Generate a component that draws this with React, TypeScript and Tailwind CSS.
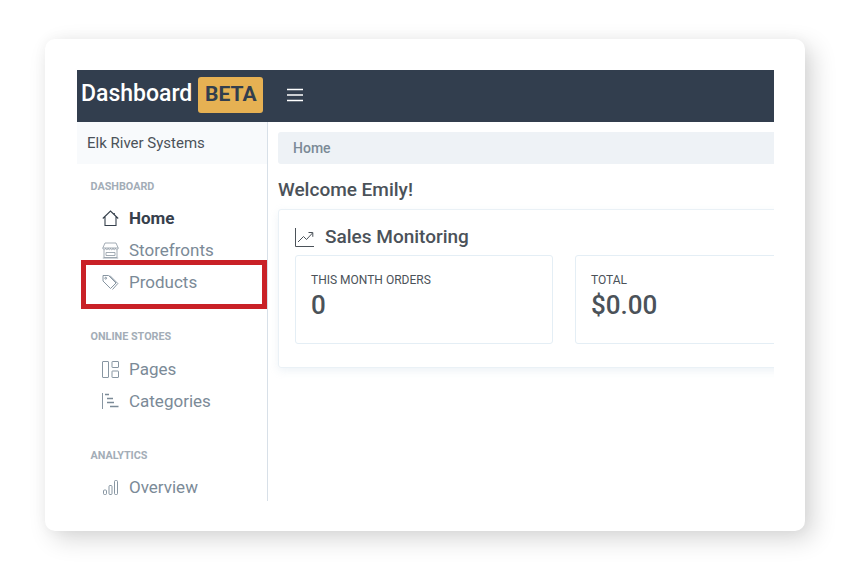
const NAV_TEXT = "text-[17px] leading-[32px] text-[#7b8a97]";

function HomeIcon() {
  return (
    <svg width="17" height="17" viewBox="0 0 17 17" fill="none" stroke="#36404c" strokeWidth="1.1">
      <path d="M.8 8.5 8.5 1 16.2 8.5M3 6.6V15.5H14V6.6M12.3 3V5" />
    </svg>
  );
}

function StoreIcon() {
  return (
    <svg width="17" height="17" viewBox="0 0 17 17" fill="none" stroke="#98a3ad" strokeWidth="0.9">
      <path d="M3 1H14L16.2 6H.8ZM.8 6C.8 8.2 3.6 8.2 3.6 6 3.6 8.2 6.2 8.2 6.2 6 6.2 8.2 8.5 8.2 8.5 6 8.5 8.2 11 8.2 11 6 11 8.2 13.4 8.2 13.4 6 13.4 8.2 16.2 8.2 16.2 6M2 8V15.5H15V8M.8 16H16.2M4 10.5H13V13.5H4Z" />
    </svg>
  );
}

function TagIcon() {
  return (
    <svg width="17" height="17" viewBox="0 0 17 17" fill="none" stroke="#7b8a97" strokeWidth="0.9">
      <path d="M1 1.5H6.5L14 9 8.5 14.5 1 7ZM7.8 1.5 15.8 9.5 10.5 15.5" />
      <circle cx="3.7" cy="4.2" r="0.9" />
    </svg>
  );
}

function PagesIcon() {
  return (
    <svg width="17" height="17" viewBox="0 0 17 17" fill="none" stroke="#7b8a97" strokeWidth="0.9">
      <rect x="0.5" y="0.5" width="6" height="16" rx="0.5" />
      <rect x="10" y="0.5" width="6.5" height="6" rx="0.5" />
      <rect x="10" y="10" width="6.5" height="6.5" rx="0.5" />
    </svg>
  );
}

function CategoriesIcon() {
  return (
    <svg width="17" height="17" viewBox="0 0 17 17" fill="none" stroke="#7b8a97">
      <path d="M.5 0V16" strokeWidth="0.9" />
      <path d="M3 1.5H7M5 5.5H11M5 9.5H12M8 13.5H16.5" strokeWidth="1.5" />
    </svg>
  );
}

function BarsIcon() {
  return (
    <svg className="ml-[1px]" width="15" height="15" viewBox="0 0 15 15" fill="none" stroke="#7b8a97" strokeWidth="0.9">
      <rect x="0.5" y="10" width="3" height="4.5" rx="1" />
      <rect x="6" y="5.5" width="3" height="9" rx="1" />
      <rect x="11.5" y="0.5" width="3" height="14" rx="1" />
    </svg>
  );
}

function ChartIcon() {
  return (
    <svg width="19" height="19" viewBox="0 0 19 19" fill="none" stroke="#4b5259" strokeWidth="1">
      <path d="M.5 0V18.5H19M3 14 8.5 8.5 11.5 11.5 17.5 5M13.5 4.5H17.8V8.8" />
    </svg>
  );
}

function SectionLabel({ children, className }: { children: string; className: string }) {
  return (
    <div className={`pl-[13.5px] text-[10.8px] leading-[12px] font-bold text-[#a3adb7] ${className}`}>
      {children}
    </div>
  );
}

function NavItem({ icon, label, active }: { icon: React.ReactNode; label: string; active?: boolean }) {
  return (
    <div className="flex h-[32px] items-center pl-[25px]">
      <span className="flex w-[27px] items-center">{icon}</span>
      <span className={active ? "text-[17px] font-bold leading-[32px] text-[#36404c]" : NAV_TEXT}>{label}</span>
    </div>
  );
}

function StatCard({ label, value, className }: { label: string; value: string; className: string }) {
  return (
    <div className={`h-[89px] shrink-0 rounded-[3px] border border-[#e4eef5] pl-[15px] pt-[17px] ${className}`}>
      <div className="text-[12px] leading-[14px] text-[#4b5259]">{label}</div>
      <div className="mt-[3px] text-[26px] font-medium leading-[30px] text-[#4b5259]">{value}</div>
    </div>
  );
}

export default function App() {
  return (
    <div className="h-[576px] w-[851px] overflow-hidden bg-white pl-[45px] pt-[39px] font-['Roboto',sans-serif]">
      <div className="h-[492px] w-[760px] rounded-[10px] bg-white pl-[32px] pt-[31px] shadow-[8px_8px_24px_rgba(0,0,0,0.16),0_0_14px_rgba(0,0,0,0.04)]">
        <div className="relative h-[431px] w-[697px] overflow-hidden">
          {/* Top bar */}
          <div className="flex h-[52px] items-center bg-[#323e4e] pb-[2px] pl-[4px]">
            <span className="-mt-[1px] text-[23px] font-medium text-white">Dashboard</span>
            <span className="ml-[6px] flex h-[36px] w-[65px] items-center justify-center rounded-[3px] bg-[#e6b153] text-[21px] font-bold text-[#323e4e]">
              BETA
            </span>
            <svg className="-mt-[1px] ml-[24px]" width="16" height="14" viewBox="0 0 16 14" fill="none" stroke="#ffffff" strokeWidth="1.3">
              <path d="M0 1.5H16M0 7H16M0 12.5H16" />
            </svg>
          </div>

          <div className="flex h-[379px]">
            {/* Sidebar */}
            <div className="w-[191px] shrink-0 border-r border-[#d8e0e8]">
              <div className="flex h-[42px] items-center bg-[#f8fafc] pl-[10px] text-[15px] text-[#4b5259]">
                Elk River Systems
              </div>
              <SectionLabel className="mt-[17px]">DASHBOARD</SectionLabel>
              <div className="mt-[9px]">
                <NavItem icon={<HomeIcon />} label="Home" active />
                <NavItem icon={<StoreIcon />} label="Storefronts" />
                <NavItem icon={<TagIcon />} label="Products" />
              </div>
              <SectionLabel className="mt-[33px]">ONLINE STORES</SectionLabel>
              <div className="mt-[10px]">
                <NavItem icon={<PagesIcon />} label="Pages" />
                <NavItem icon={<CategoriesIcon />} label="Categories" />
              </div>
              <SectionLabel className="mt-[33px]">ANALYTICS</SectionLabel>
              <div className="mt-[9px]">
                <NavItem icon={<BarsIcon />} label="Overview" />
              </div>
            </div>

            {/* Main */}
            <div className="min-w-0 flex-1 pl-[10px] pt-[10px]">
              <div className="flex h-[32px] w-[520px] items-center rounded-[3px] bg-[#eef2f6] pl-[15px] text-[14px] font-medium text-[#7b8a97]">
                Home
              </div>
              <div className="mt-[14px] text-[19px] font-medium leading-[24px] text-[#4b5259]">Welcome Emily!</div>
              <div className="mt-[7px] h-[159px] w-[560px] rounded-[3px] border border-[#eaf1f6] pl-[16px] pt-[15px] shadow-[0_3px_8px_rgba(160,190,210,0.18)]">
                <div className="flex h-[24px] items-center">
                  <ChartIcon />
                  <span className="ml-[11px] text-[19px] font-medium text-[#4b5259]">Sales Monitoring</span>
                </div>
                <div className="mt-[6px] flex">
                  <StatCard label="THIS MONTH ORDERS" value="0" className="w-[258px]" />
                  <StatCard label="TOTAL" value="$0.00" className="ml-[22px] w-[258px]" />
                </div>
              </div>
            </div>
          </div>

          {/* Red highlight around Products */}
          <div className="absolute left-[4px] top-[190px] h-[49px] w-[186px] border-[5px] border-[#c92127]" />
        </div>
      </div>
    </div>
  );
}
